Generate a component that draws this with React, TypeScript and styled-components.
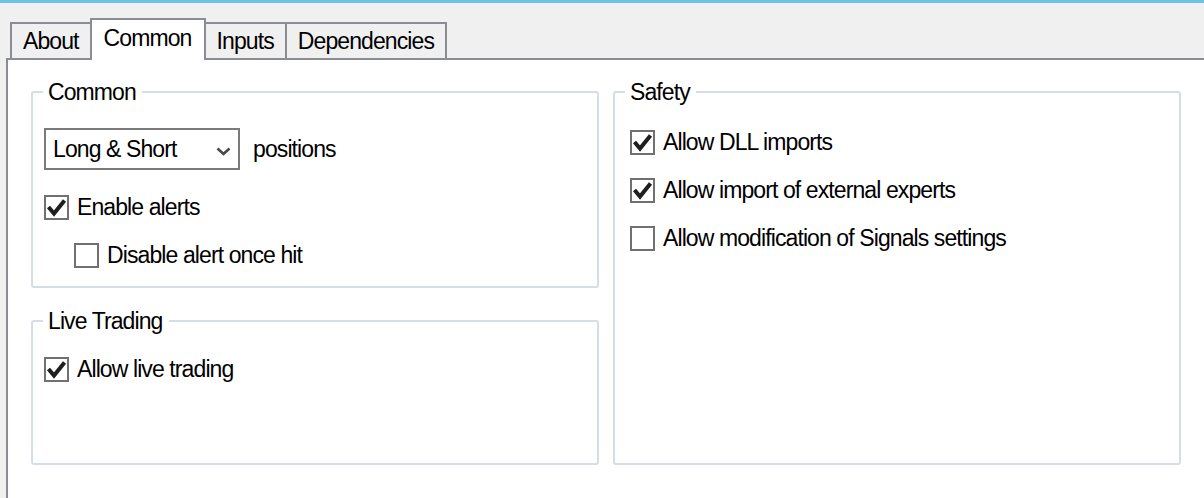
import React, { useState } from "react";
import styled, { createGlobalStyle } from "styled-components";

// Types -------------------------------------------------------------------------

interface CheckProps {
  label: string;
  checked: boolean;
  indent?: boolean;
  onToggle: () => void;
}

// Component ---------------------------------------------------------------------

const TABS = ["About", "Common", "Inputs", "Dependencies"];

const CheckRow: React.FC<CheckProps> = ({ label, checked, indent, onToggle }) => (
  <Row $indent={indent} onClick={onToggle}>
    <Box>
      {checked && (
        <svg width="21" height="21" viewBox="0 0 21 21">
          <polyline
            points="2.5,10 8,16.5 18.5,3.5"
            fill="none"
            stroke="#1e1e1e"
            strokeWidth="4"
            strokeLinejoin="miter"
          />
        </svg>
      )}
    </Box>
    <span>{label}</span>
  </Row>
);

const App: React.FC = () => {
  const [tab, setTab] = useState<string>("Common");
  const [checks, setChecks] = useState<Record<string, boolean>>({
    alerts: true,
    once: false,
    live: true,
    dll: true,
    external: true,
    signals: false,
  });

  const toggle = (key: string) => () =>
    setChecks({ ...checks, [key]: !checks[key] });

  return (
    <>
      <GlobalStyle />
      <Window>
        <Stripe />
        <TabStrip>
          {TABS.map((name) => (
            <Tab key={name} $active={name === tab} onClick={() => setTab(name)}>
              {name}
            </Tab>
          ))}
        </TabStrip>
        <Panel>
          <Columns>
            <Column>
              <Group $height={210}>
                <Legend>Common</Legend>
                <Body $top={22} $padX={11}>
                  <SelectRow>
                    <Select>
                      <span>Long &amp; Short</span>
                      <svg width="15" height="9" viewBox="0 0 15 9">
                        <polyline
                          points="1.5,1.5 7.5,7 13.5,1.5"
                          fill="none"
                          stroke="#4a4a4a"
                          strokeWidth="2.6"
                        />
                      </svg>
                    </Select>
                    <span>positions</span>
                  </SelectRow>
                  <CheckRow
                    label="Enable alerts"
                    checked={checks.alerts}
                    onToggle={toggle("alerts")}
                  />
                  <CheckRow
                    label="Disable alert once hit"
                    indent
                    checked={checks.once}
                    onToggle={toggle("once")}
                  />
                </Body>
              </Group>
              <Group $grow>
                <Legend>Live Trading</Legend>
                <Body $top={20} $padX={11}>
                  <CheckRow
                    label="Allow live trading"
                    checked={checks.live}
                    onToggle={toggle("live")}
                  />
                </Body>
              </Group>
            </Column>
            <Column>
              <Group $grow>
                <Legend>Safety</Legend>
                <Body $top={22} $padX={15}>
                  <CheckRow
                    label="Allow DLL imports"
                    checked={checks.dll}
                    onToggle={toggle("dll")}
                  />
                  <CheckRow
                    label="Allow import of external experts"
                    checked={checks.external}
                    onToggle={toggle("external")}
                  />
                  <CheckRow
                    label="Allow modification of Signals settings"
                    checked={checks.signals}
                    onToggle={toggle("signals")}
                  />
                </Body>
              </Group>
            </Column>
          </Columns>
        </Panel>
      </Window>
    </>
  );
};

export default App;

// Styled ------------------------------------------------------------------------

const GlobalStyle = createGlobalStyle`
  * { box-sizing: border-box; }
  html, body {
    margin: 0;
    padding: 0;
    background: #f0f0f0;
    font-family: "Liberation Sans", Arial, sans-serif;
    font-size: 23px;
    letter-spacing: -0.9px;
    color: #000;
  }
`;

const Window = styled.div`
  width: 1204px;
  height: 498px;
  overflow: hidden;
  display: flex;
  flex-direction: column;
  background: #f0f0f0;
`;

const Stripe = styled.div`
  height: 3px;
  background: #6cc3e6;
  flex: none;
`;

const TabStrip = styled.div`
  display: flex;
  align-items: flex-end;
  padding: 15px 0 0 10px;
  position: relative;
  z-index: 1;
  flex: none;
`;

const Tab = styled.div<{ $active: boolean }>`
  display: flex;
  align-items: center;
  height: ${(p) => (p.$active ? "42px" : "36px")};
  padding: ${(p) => (p.$active ? "0 12px 4px" : "0 11px")};
  margin-left: -2px;
  margin-bottom: ${(p) => (p.$active ? "-2px" : "0")};
  border: 2px solid #8a8d93;
  border-bottom: none;
  background: ${(p) => (p.$active ? "#fff" : "#f0f0f0")};
  position: relative;
  z-index: ${(p) => (p.$active ? 2 : 1)};
  line-height: 28px;
  cursor: default;
  &:first-child {
    margin-left: 0;
  }
`;

const Panel = styled.div`
  flex: 1;
  margin-left: 6px;
  background: #fff;
  border-top: 2px solid #8a8d93;
  border-left: 2px solid #8a8d93;
`;

const Columns = styled.div`
  display: grid;
  grid-template-columns: 568px 568px;
  column-gap: 14px;
  height: 387px;
  margin: 18px 0 0 23px;
`;

const Column = styled.div`
  display: flex;
  flex-direction: column;
  gap: 19px;
`;

const Group = styled.fieldset<{ $height?: number; $grow?: boolean }>`
  margin: 0;
  padding: 0;
  min-width: 0;
  border: 2px solid #d6dee5;
  border-radius: 3px;
  ${(p) => (p.$height ? `height: ${p.$height}px; flex: none;` : "")}
  ${(p) => (p.$grow ? "flex: 1;" : "")}
`;

const Legend = styled.legend`
  margin-left: 10px;
  padding: 0 6px 0 5px;
  line-height: 28px;
`;

const Body = styled.div<{ $top: number; $padX: number }>`
  display: flex;
  flex-direction: column;
  gap: 20px;
  padding: ${(p) => `${p.$top}px ${p.$padX}px 0`};
`;

const SelectRow = styled.div`
  display: flex;
  align-items: center;
  gap: 13px;
  margin-bottom: 3px;
`;

const Select = styled.div`
  width: 196px;
  height: 42px;
  border: 2px solid #7a7a7a;
  background: #fff;
  display: flex;
  align-items: center;
  justify-content: space-between;
  padding: 0 7px 0 7px;
  svg {
    margin-top: 4px;
  }
`;

const Row = styled.div<{ $indent?: boolean }>`
  display: flex;
  align-items: center;
  gap: 8px;
  height: 28px;
  padding-left: ${(p) => (p.$indent ? "30px" : "0")};
  cursor: default;
  user-select: none;
`;

const Box = styled.div`
  width: 25px;
  height: 25px;
  flex: none;
  border: 2px solid #707070;
  background: #fff;
  display: flex;
  align-items: center;
  justify-content: center;
`;
